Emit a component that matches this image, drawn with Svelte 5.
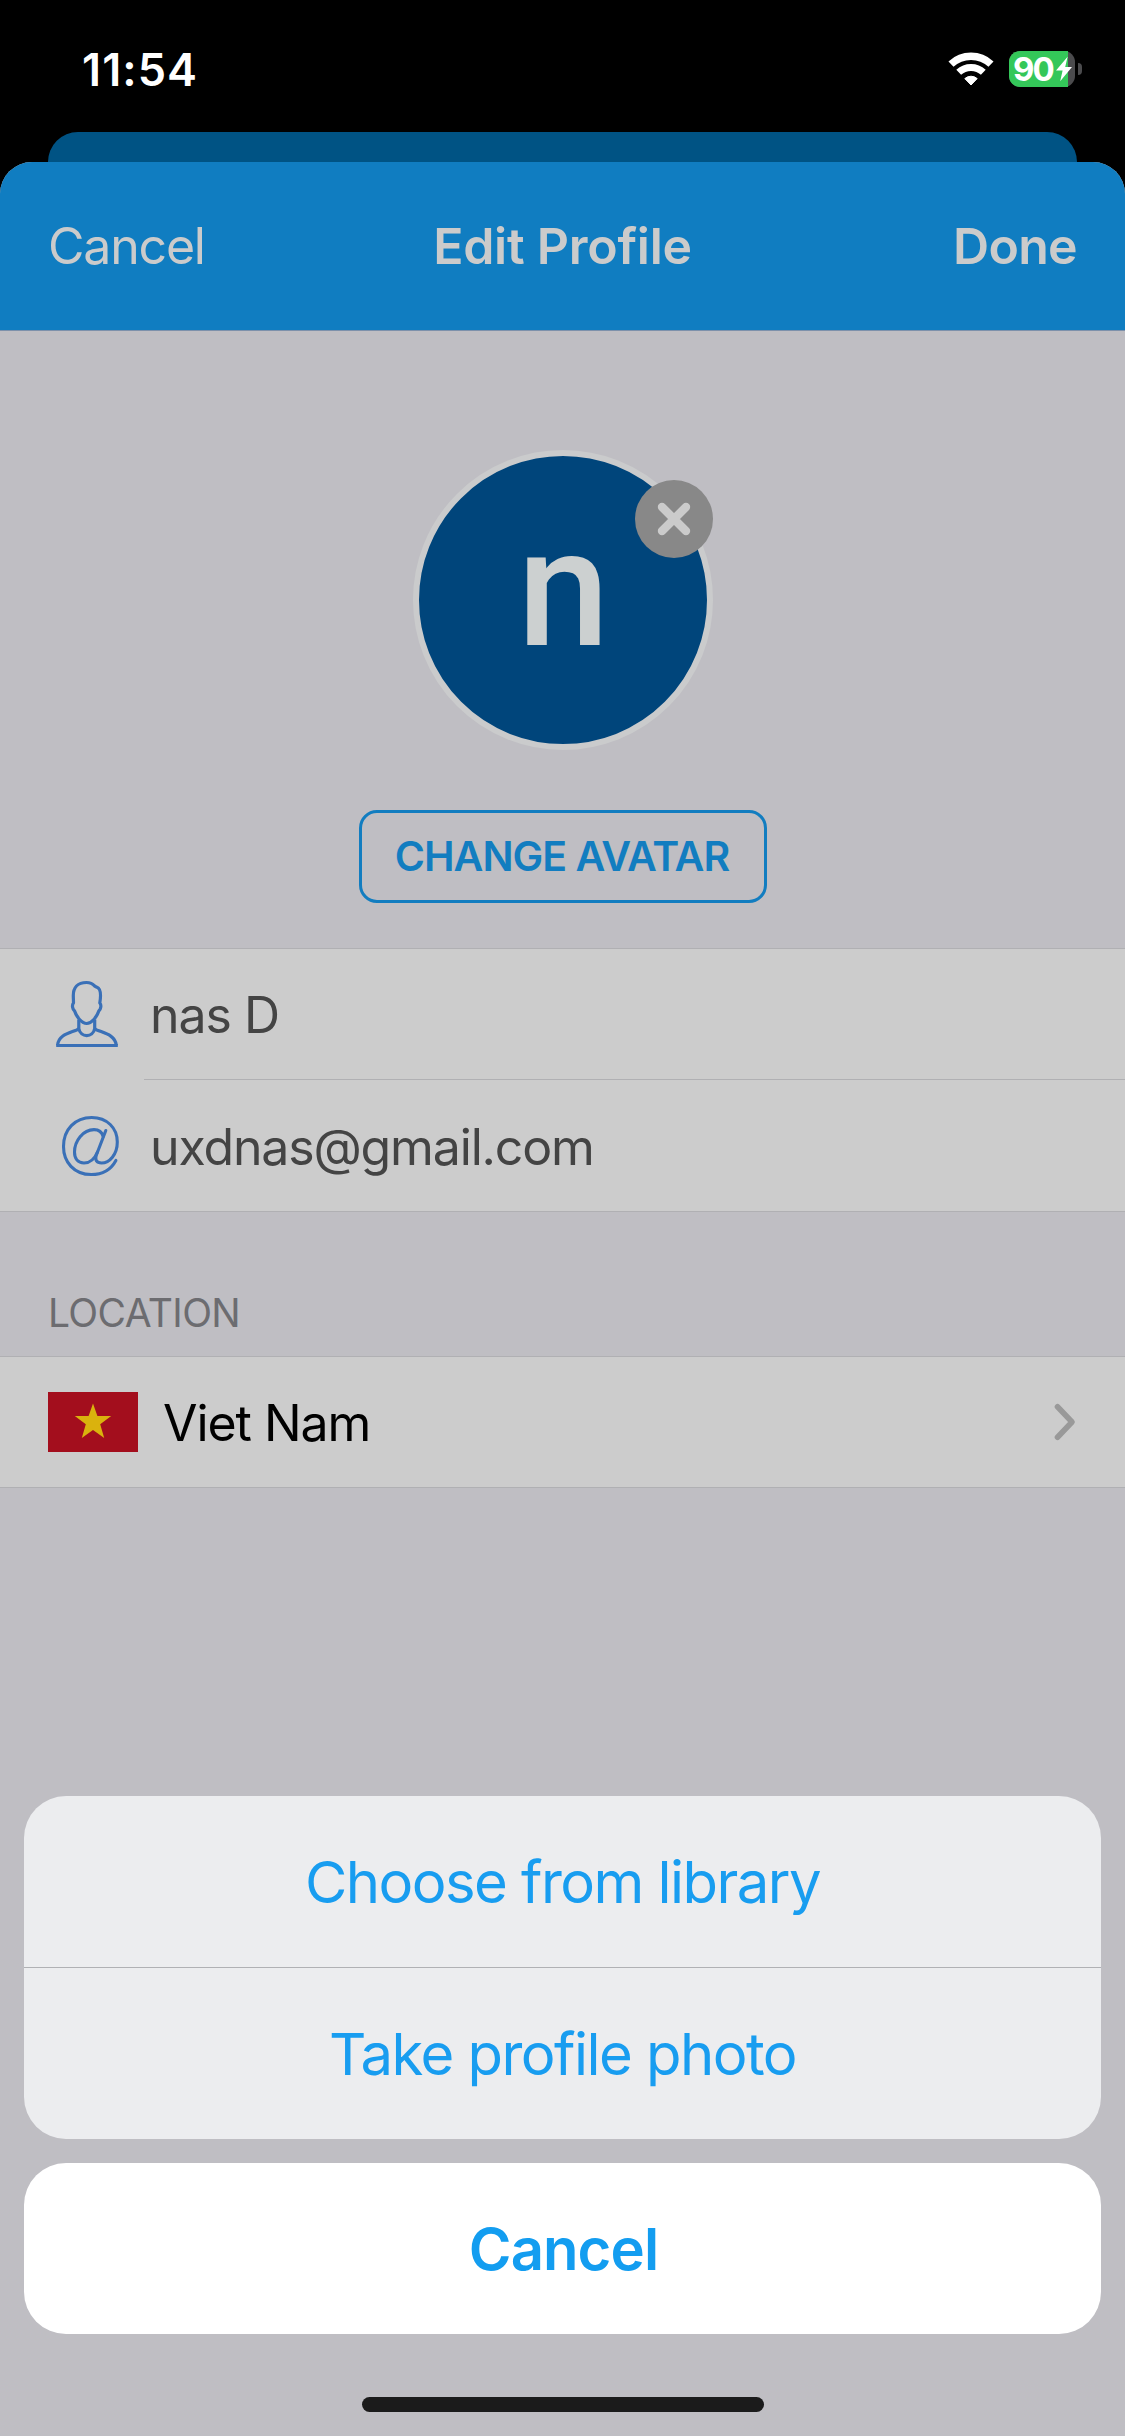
<script>
    let name = 'nas D';
    let email = 'uxdnas@gmail.com';
    let country = 'Viet Nam';
    let battery = 90;

    const actions = ['Choose from library', 'Take profile photo'];
</script>

<div class="screen">
    <div class="status">
        <span class="time">11:54</span>
        <div class="indicators">
            <svg class="wifi" viewBox="0 0 46 34">
                <path d="M3 12.1A29.3 29.3 0 0 1 43 12.1" fill="none" stroke="#fff" stroke-width="7.4" />
                <path d="M10.7 20.3A18 18 0 0 1 35.3 20.3" fill="none" stroke="#fff" stroke-width="7" />
                <path d="M16.8 26.6A9.3 9.3 0 0 1 29.2 26.6L23 33Z" fill="#fff" stroke="#fff" stroke-width="1" stroke-linejoin="round" />
            </svg>
            <div class="battery">
                <div class="level" style="width: {battery}%"></div>
                <span class="percent">{battery}</span>
                <svg class="bolt" viewBox="0 0 18 26">
                    <path d="M12.6 .8L1 14.6H7.6L5.2 25.2L17 11H10.2Z" fill="#fff" />
                </svg>
            </div>
            <div class="nub"></div>
        </div>
    </div>

    <div class="behind"></div>

    <div class="sheet">
        <header>
            <button class="nav cancel">Cancel</button>
            <h1>Edit Profile</h1>
            <button class="nav done">Done</button>
        </header>

        <div class="profile">
            <div class="avatar">
                <span class="initial">{name[0]}</span>
                <button class="remove" aria-label="Remove avatar">
                    <svg viewBox="0 0 78 78">
                        <path d="M27 27L51 51M51 27L27 51" stroke="#cbcbcb" stroke-width="8.4" stroke-linecap="round" />
                    </svg>
                </button>
            </div>
            <button class="change">CHANGE AVATAR</button>
        </div>

        <div class="list">
            <div class="row">
                <svg class="icon" viewBox="0 0 64 68">
                    <g fill="none" stroke="#3a70b7" stroke-width="3.2" stroke-linejoin="round">
                        <path d="M31.5 2.5C22.5 2.5 18.3 8 18.3 15.5C18.3 18 18.5 20.5 18.5 23C16.8 25 17.3 29 19.6 31C21.5 37 27 43.5 31.7 43.5C36.5 43.5 41.8 37 43.8 31C46 29 46.6 25 44.8 23C45.8 17 46.5 9 42 7.3L39.6 6C37.5 3.5 35 2.5 31.5 2.5Z" />
                        <path d="M23.8 39.5V48.5C25.5 58 38 58 39.7 48.5V39.5" />
                        <path d="M23.8 48.7C19 52.5 3.5 53 2.5 65.5M39.7 48.7C44.5 52.5 60 53 61.4 65.5" />
                        <path d="M1.2 65.5H62.8" />
                    </g>
                </svg>
                <span class="value">{name}</span>
            </div>
            <div class="divider"></div>
            <div class="row last">
                <svg class="icon at" viewBox="0 0 60 64">
                    <g fill="none" stroke="#3a70b7" stroke-width="3.1" stroke-linecap="round" stroke-linejoin="round">
                        <path d="M55.9 46.4C51 55.5 42.5 60.5 31.3 60.5C14 60.5 3.5 48 3.5 32.5C3.5 15.5 15 3.5 31.7 3.5C47 3.5 57.3 14 57.3 28C57.3 40.5 49.5 49 41.5 49C36.5 49 34.8 46 36.2 41.5L45.8 16.5" />
                        <path d="M43.2 22.5C42 18.2 38.5 15.6 34 15.6C23 15.6 14.5 27 14.5 38C14.5 44.8 18 49 24 49C30.5 49 35 44 37.5 38" />
                    </g>
                </svg>
                <span class="value email">{email}</span>
            </div>
        </div>

        <h2>LOCATION</h2>

        <div class="list">
            <div class="row location">
                <svg class="flag" viewBox="0 0 90 60">
                    <rect width="90" height="60" fill="#a30e1d" />
                    <path d="M45 11.5L49.4 24H63.2L52.2 32.3L56.2 46L45 38L33.8 46L37.8 32.3L26.8 24H40.6Z" fill="#dab20d" />
                </svg>
                <span class="country">{country}</span>
                <svg class="chevron" viewBox="0 0 24 40">
                    <path d="M4.5 4.8L19 20L4.5 35.2" fill="none" stroke="#999" stroke-width="5.6" stroke-linecap="round" stroke-linejoin="round" />
                </svg>
            </div>
        </div>
    </div>

    <div class="actions">
        <div class="group">
            {#each actions as action}
                <button class="action">{action}</button>
            {/each}
        </div>
        <button class="action dismiss">Cancel</button>
        <div class="home"></div>
    </div>
</div>

<style>
    :global(body){
        margin: 0;
        background: #000;
    }

    .screen{
        position: relative;
        display: flex;
        flex-direction: column;
        width: 1125px;
        height: 2436px;
        overflow: hidden;
        background: #000;
        font-family: Inter, "Liberation Sans", sans-serif;
    }

    button{
        margin: 0;
        padding: 0;
        border: none;
        background: none;
        font-family: inherit;
        white-space: nowrap;
    }

    h1, h2{
        margin: 0;
    }

    svg{
        display: block;
        flex: none;
    }

    .status{
        display: flex;
        justify-content: space-between;
        align-items: center;
        box-sizing: border-box;
        height: 132px;
        padding: 6px 43px 0 82px;
    }

    .time{
        color: #fff;
        font-size: 45px;
        font-weight: 600;
        letter-spacing: 1.1px;
    }

    .indicators{
        display: flex;
        align-items: center;
    }

    .wifi{
        width: 46px;
        height: 34px;
        margin-right: 15px;
    }

    .battery{
        position: relative;
        display: flex;
        align-items: center;
        width: 66px;
        height: 36px;
        border-radius: 11px;
        background: #4b4b4d;
    }

    .level{
        position: absolute;
        top: 0;
        left: 0;
        height: 100%;
        border-radius: 11px 0 0 11px;
        background: #34c759;
    }

    .percent{
        position: relative;
        margin-left: 4px;
        color: #fff;
        font-size: 33px;
        font-weight: 700;
        line-height: 36px;
        letter-spacing: -2px;
    }

    .bolt{
        position: absolute;
        left: 46px;
        width: 18px;
        height: 26px;
    }

    .nub{
        width: 4px;
        height: 12px;
        margin-left: 3px;
        border-radius: 0 6px 6px 0;
        background: #4b4b4d;
    }

    /* top edge of the page under the modal */
    .behind{
        height: 30px;
        margin: 0 48px;
        border-radius: 30px 30px 0 0;
        background: #005384;
    }

    .sheet{
        flex: 1;
        border-radius: 32px 32px 0 0;
        overflow: hidden;
        background: #bfbec3;
    }

    header{
        display: grid;
        grid-template-columns: 1fr auto 1fr;
        align-items: center;
        height: 168px;
        padding: 0 48px;
        border-bottom: 1px solid #7d91ab;
        background: #107dc1;
    }

    .nav, h1{
        color: #cbcbcb;
        font-size: 50px;
        font-weight: 600;
        letter-spacing: -.25px;
    }

    .nav.cancel{
        justify-self: start;
        font-weight: 400;
        letter-spacing: -1.2px;
    }

    .nav.done{
        justify-self: end;
        letter-spacing: -.7px;
    }

    .profile{
        display: flex;
        flex-direction: column;
        align-items: center;
        box-sizing: border-box;
        height: 617px;
        padding-top: 119px;
    }

    .avatar{
        position: relative;
        display: flex;
        justify-content: center;
        align-items: center;
        box-sizing: border-box;
        width: 300px;
        height: 300px;
        border: 6px solid #cacbcc;
        border-radius: 50%;
        background: #00457b;
    }

    .initial{
        padding: 0 0 23px 2px;
        color: #ccd0d0;
        font-family: Roboto, sans-serif;
        font-size: 165px;
        font-weight: 500;
        line-height: 1;
    }

    .remove{
        position: absolute;
        top: 24px;
        right: -6px;
        width: 78px;
        height: 78px;
        border-radius: 50%;
        background: #888;
    }

    .change{
        box-sizing: border-box;
        width: 408px;
        height: 93px;
        margin-top: 60px;
        padding: 0 1px 1px 0;
        border: 3px solid #127dc0;
        border-radius: 18px;
        color: #127dc0;
        font-size: 41px;
        font-weight: 600;
        letter-spacing: -1px;
    }

    .list{
        border-top: 1px solid #b0b0b3;
        border-bottom: 1px solid #b0b0b3;
        background: #ccc;
    }

    .row{
        display: flex;
        align-items: center;
        box-sizing: border-box;
        height: 130px;
        padding-left: 55px;
    }

    .row.last{
        height: 131px;
    }

    .divider{
        height: 1px;
        margin-left: 144px;
        background: #b0b0b3;
    }

    .icon{
        width: 64px;
        height: 68px;
        margin-right: 31px;
    }

    .icon.at{
        width: 60px;
        height: 64px;
        margin: 0 30px 0 5px;
    }

    .value{
        color: #444;
        font-size: 50px;
        line-height: 60px;
        padding-top: 2px;
        letter-spacing: -1px;
    }

    .value.email{
        letter-spacing: -1.15px;
    }

    h2{
        display: flex;
        align-items: center;
        box-sizing: border-box;
        height: 144px;
        padding: 57px 0 0 48px;
        color: #6c6c70;
        font-size: 39px;
        font-weight: 400;
        letter-spacing: -.6px;
    }

    .location{
        padding: 0 48px;
    }

    .country{
        flex: 1;
        margin-left: 25px;
        padding-top: 2px;
        color: #000;
        font-size: 50px;
        line-height: 60px;
        letter-spacing: -1.05px;
    }

    .flag{
        width: 90px;
        height: 60px;
    }

    .chevron{
        width: 24px;
        height: 40px;
    }

    .actions{
        position: absolute;
        left: 24px;
        right: 24px;
        bottom: 24px;
        display: flex;
        flex-direction: column;
        align-items: stretch;
    }

    .group{
        display: flex;
        flex-direction: column;
        border-radius: 42px;
        overflow: hidden;
        background: #ecedef;
    }

    .action{
        height: 171px;
        color: #189df0;
        font-size: 58px;
        letter-spacing: -1.55px;
    }

    .action + .action{
        box-sizing: border-box;
        height: 172px;
        border-top: 1px solid #b0b1b4;
    }

    .dismiss{
        margin-top: 24px;
        padding-left: 2px;
        border-radius: 42px;
        background: #fff;
        color: #139df0;
        font-weight: 600;
        letter-spacing: -.9px;
    }

    .home{
        align-self: center;
        width: 402px;
        height: 15px;
        margin-top: 63px;
        border-radius: 8px;
        background: #1b1b1b;
    }
</style>
